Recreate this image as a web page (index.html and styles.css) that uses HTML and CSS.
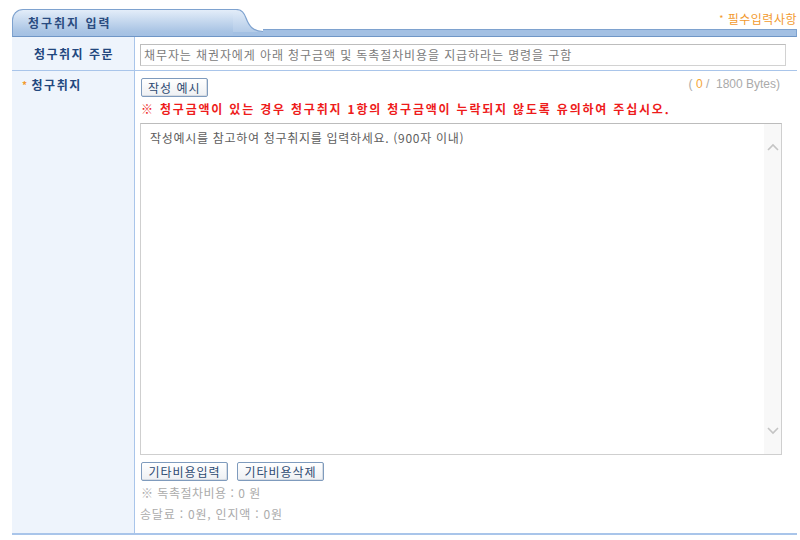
FILE: index.html
```html
<!DOCTYPE html>
<html lang="ko">
<head>
    <meta charset="UTF-8">
    <title>청구취지 입력</title>
    <link rel="stylesheet" href="styles.css">
</head>
<body>
    <div class="panel">
        <!-- 탭 제목 -->
        <div class="panel-head">
            <div class="tab"><h2>청구취지 입력</h2></div>
            <svg class="tab-curve" width="30" height="28" viewBox="0 0 30 28">
                <defs>
                    <linearGradient id="tabFill" x1="0" y1="0" x2="0" y2="1">
                        <stop offset="0" stop-color="#e3edf9"/>
                        <stop offset="1" stop-color="#a9c4e4"/>
                    </linearGradient>
                </defs>
                <path d="M0 0.5 L3 0.5 C9 0.5 11 4 13 9 C16 17 20 22.5 30 22.5 L30 28 L0 28 Z" fill="url(#tabFill)"/>
                <path d="M0 0.5 L3 0.5 C9 0.5 11 4 13 9 C16 17 20 22.5 30 22.5" fill="none" stroke="#7ea2cf" stroke-width="1.2"/>
                <rect x="0" y="23" width="30" height="4" fill="#a3c0e3"/>
                <line x1="0" y1="27.5" x2="30" y2="27.5" stroke="#6f96c6" stroke-width="1"/>
            </svg>
            <div class="head-rest">
                <span class="req"><i>*</i> 필수입력사항</span>
            </div>
        </div>

        <!-- 주문 -->
        <div class="form-row row-order">
            <div class="label center">청구취지 주문</div>
            <div class="field">
                <div class="text-box">채무자는 채권자에게 아래 청구금액 및 독촉절차비용을 지급하라는 명령을 구함</div>
            </div>
        </div>

        <!-- 청구취지 -->
        <div class="form-row row-claim">
            <div class="label"><i class="dot">*</i>청구취지</div>
            <div class="field">
                <div class="tool-line">
                    <button class="btn">작성 예시</button>
                    <span class="bytes">( <b>0</b> / &nbsp;1800 Bytes)</span>
                </div>
                <p class="notice">※ 청구금액이 있는 경우 청구취지 1항의 청구금액이 누락되지 않도록 유의하여 주십시오.</p>
                <div class="area-box">
                    <textarea placeholder="작성예시를 참고하여 청구취지를 입력하세요. (900자 이내)"></textarea>
                    <div class="scroll-track">
                        <svg width="12" height="8" viewBox="0 0 12 8"><path d="M1 7 L6 2 L11 7" fill="none" stroke="#c4c4c4" stroke-width="1.6"/></svg>
                        <svg width="12" height="8" viewBox="0 0 12 8"><path d="M1 1 L6 6 L11 1" fill="none" stroke="#c4c4c4" stroke-width="1.6"/></svg>
                    </div>
                </div>
                <div class="btn-line">
                    <button class="btn">기타비용입력</button>
                    <button class="btn">기타비용삭제</button>
                </div>
                <p class="cost">※ 독촉절차비용 : 0 원</p>
                <p class="cost fee">송달료 : 0원, 인지액 : 0원</p>
            </div>
        </div>
    </div>
</body>
</html>
```

FILE: styles.css
```css
* {
    margin: 0;
    padding: 0;
    box-sizing: border-box;
}

body {
    font-family: "Noto Sans CJK KR", "Noto Sans", sans-serif;
    font-size: 12px;
    background: #fff;
    color: #555;
}

.panel {
    width: 785px;
    margin: 9px 0 0 12px;
}

/* 탭 */
.panel-head {
    display: flex;
    height: 28px;
}

.tab {
    width: 221px;
    height: 28px;
    background: linear-gradient(#e3edf9, #a9c4e4 82%, #a3c0e3);
    border: 1px solid #7ea2cf;
    border-right: none;
    border-bottom: 1px solid #6f96c6;
    border-top-left-radius: 11px;
    padding: 6px 0 0 15px;
}

.tab h2 {
    font-size: 12px;
    line-height: 14px;
    color: #2a4b80;
    letter-spacing: 2px;
}

.tab-curve {
    display: block;
    flex: none;
}

.head-rest {
    flex: 1;
    position: relative;
}

.head-rest::after {
    content: "";
    position: absolute;
    left: 0;
    right: 0;
    bottom: 0;
    height: 6px;
    background: #a3c0e3;
    border-top: 1px solid #7ea2cf;
    border-bottom: 1px solid #6f96c6;
    border-right: 1px solid #7ea2cf;
}

.req {
    position: absolute;
    right: 0;
    top: 3px;
    color: #f29a2e;
    line-height: 14px;
    letter-spacing: 0.5px;
}

.req i {
    font-style: normal;
    font-size: 9px;
    vertical-align: 2px;
}

/* 폼 행 */
.form-row {
    display: grid;
    grid-template-columns: 123px 1fr;
    border-bottom: 1px solid #a9c5ea;
}

.label {
    background: #eef4fc;
    border-right: 1px solid #a9c5ea;
    font-weight: bold;
    color: #22477e;
    line-height: 14px;
    letter-spacing: 1.5px;
}

.label.center {
    display: flex;
    align-items: center;
    justify-content: center;
    padding-left: 2px;
}

.row-order {
    height: 34px;
}

.row-order .field {
    padding: 7px 11px 0 5px;
}

.text-box {
    height: 22px;
    border: 1px solid #d2d2d2;
    border-top-color: #bdbdbd;
    border-left-color: #bdbdbd;
    color: #7b7b7b;
    line-height: 20px;
    padding-left: 3px;
    letter-spacing: 0.9px;
    white-space: nowrap;
    overflow: hidden;
}

.row-claim {
    height: 464px;
    border-bottom: 2px solid #a9c5ea;
}

.row-claim .label {
    padding: 7px 0 0 10px;
}

.dot {
    font-style: normal;
    color: #f29a2e;
    font-size: 10px;
    margin-right: 3px;
    vertical-align: 1px;
}

.row-claim .field {
    padding: 7px 14px 0 5px;
}

.tool-line {
    display: flex;
    justify-content: space-between;
    align-items: flex-start;
}

.btn {
    height: 19px;
    padding: 0 6px;
    margin-left: 1px;
    border: 1px solid #7f9bbd;
    border-radius: 2px;
    background: linear-gradient(#ffffff, #eef0f3);
    box-shadow: inset -1px -1px 0 #d6dbe2;
    font-family: inherit;
    font-size: 12px;
    line-height: 16px;
    color: #2e4b72;
    letter-spacing: 1px;
}

.bytes {
    color: #aaa;
    letter-spacing: 0;
    margin-top: -1px;
    margin-right: 3px;
    font-family: "Liberation Sans", "Noto Sans CJK KR", sans-serif;
    font-size: 12px;
}

.bytes b {
    font-weight: normal;
    color: #f5a637;
}

.notice {
    margin: 4px 0 0 1px;
    color: #ee1b1b;
    font-weight: bold;
    line-height: 16px;
    letter-spacing: 1.8px;
}

.area-box {
    display: flex;
    margin-top: 6px;
    width: 642px;
    height: 332px;
    border: 1px solid #cfcfcf;
    border-top-color: #bcbcbc;
}

.area-box textarea {
    flex: 1;
    border: none;
    resize: none;
    outline: none;
    padding: 5px 9px;
    font-family: inherit;
    font-size: 12px;
    line-height: 18px;
    letter-spacing: 0.7px;
    color: #555;
}

.area-box textarea::placeholder {
    color: #5e5e5e;
}

.scroll-track {
    width: 17px;
    background: #f8f8f8;
    display: flex;
    flex-direction: column;
    justify-content: space-between;
    align-items: center;
    padding: 19px 0 19px;
}

.btn-line {
    display: flex;
    gap: 8px;
    margin-top: 7px;
}

.btn-line .btn {
    width: 87px;
    padding: 0;
}

.cost {
    color: #ababab;
    line-height: 14px;
    margin-top: 5px;
    margin-left: 1px;
    letter-spacing: 0.5px;
}

.cost.fee {
    margin-top: 7px;
    margin-left: 0;
    letter-spacing: 0.8px;
}
```
